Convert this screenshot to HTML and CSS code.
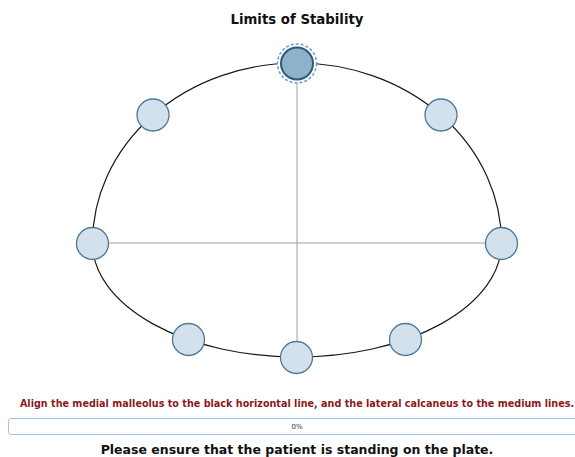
FILE: index.html
```html
<!DOCTYPE html>
<html lang="en">
<head>
    <meta charset="UTF-8">
    <meta name="viewport" content="width=device-width, initial-scale=1.0">
    <title>Limits of Stability</title>
    <link rel="stylesheet" href="styles.css">
</head>
<body>
    <div class="page">
        <h1 class="title">Limits of Stability</h1>

        <svg class="plate" width="578" height="360" viewBox="0 0 578 360">
            <line class="axis" x1="289" y1="34" x2="289" y2="328"/>
            <line class="axis" x1="84.5" y1="214" x2="493.5" y2="214"/>
            <path class="outline" d="M 84.5 214 A 204.5 180 0 0 1 493.5 214 A 204.5 114 0 0 1 84.5 214 Z"/>

            <circle class="target" cx="145" cy="86" r="16"/>
            <circle class="target" cx="433" cy="86" r="16"/>
            <circle class="target" cx="84.5" cy="214.5" r="16"/>
            <circle class="target" cx="493.5" cy="214.5" r="16"/>
            <circle class="target" cx="180.5" cy="310.5" r="16"/>
            <circle class="target" cx="397.5" cy="310.5" r="16"/>
            <circle class="target" cx="288.5" cy="328.5" r="16"/>

            <circle class="ring" cx="289" cy="34.5" r="19.5"/>
            <circle class="target active" cx="289" cy="34.5" r="16"/>
        </svg>

        <p class="hint">Align the medial malleolus to the black horizontal line, and the lateral calcaneus to the medium lines.</p>

        <div class="progress">
            <span class="progress-label">0%</span>
        </div>

        <p class="status">Please ensure that the patient is standing on the plate.</p>
    </div>
</body>
</html>
```

FILE: styles.css
```css
body {
    margin: 0;
    font-family: "DejaVu Sans", Verdana, sans-serif;
    background: #fff;
    color: #111;
    overflow: hidden;
}
.page {
    width: 578px;
    margin-left: 8px;
}
.title {
    margin: 10px 0 0;
    font-size: 13.3px;
    line-height: 20px;
    text-align: center;
}
.plate {
    display: block;
    margin-top: -1px;
}
.axis {
    stroke: #a0a0a0;
    stroke-width: 1;
}
.outline {
    fill: none;
    stroke: #1a1a1a;
    stroke-width: 1.2;
}
.target {
    fill: #d3e1ec;
    stroke: #4b7898;
    stroke-width: 1.3;
}
.target.active {
    fill: #8fb1c9;
    stroke: #2c5a7a;
    stroke-width: 2;
}
.ring {
    fill: #fff;
    stroke: #6a98d8;
    stroke-width: 1.5;
    stroke-dasharray: 3 2;
}
.hint {
    margin: 8px 0 0;
    font-size: 9.65px;
    line-height: 14px;
    font-weight: bold;
    color: #8b1a1a;
    text-align: center;
    white-space: nowrap;
}
.progress {
    margin-top: 7px;
    height: 15px;
    border: 1px solid #a9c0e0;
    border-radius: 3px;
    display: flex;
    align-items: center;
    justify-content: center;
}
.progress-label {
    font-size: 7px;
    color: #333;
}
.status {
    margin: 6px 0 0;
    font-size: 12.5px;
    line-height: 18px;
    font-weight: bold;
    text-align: center;
}
```
